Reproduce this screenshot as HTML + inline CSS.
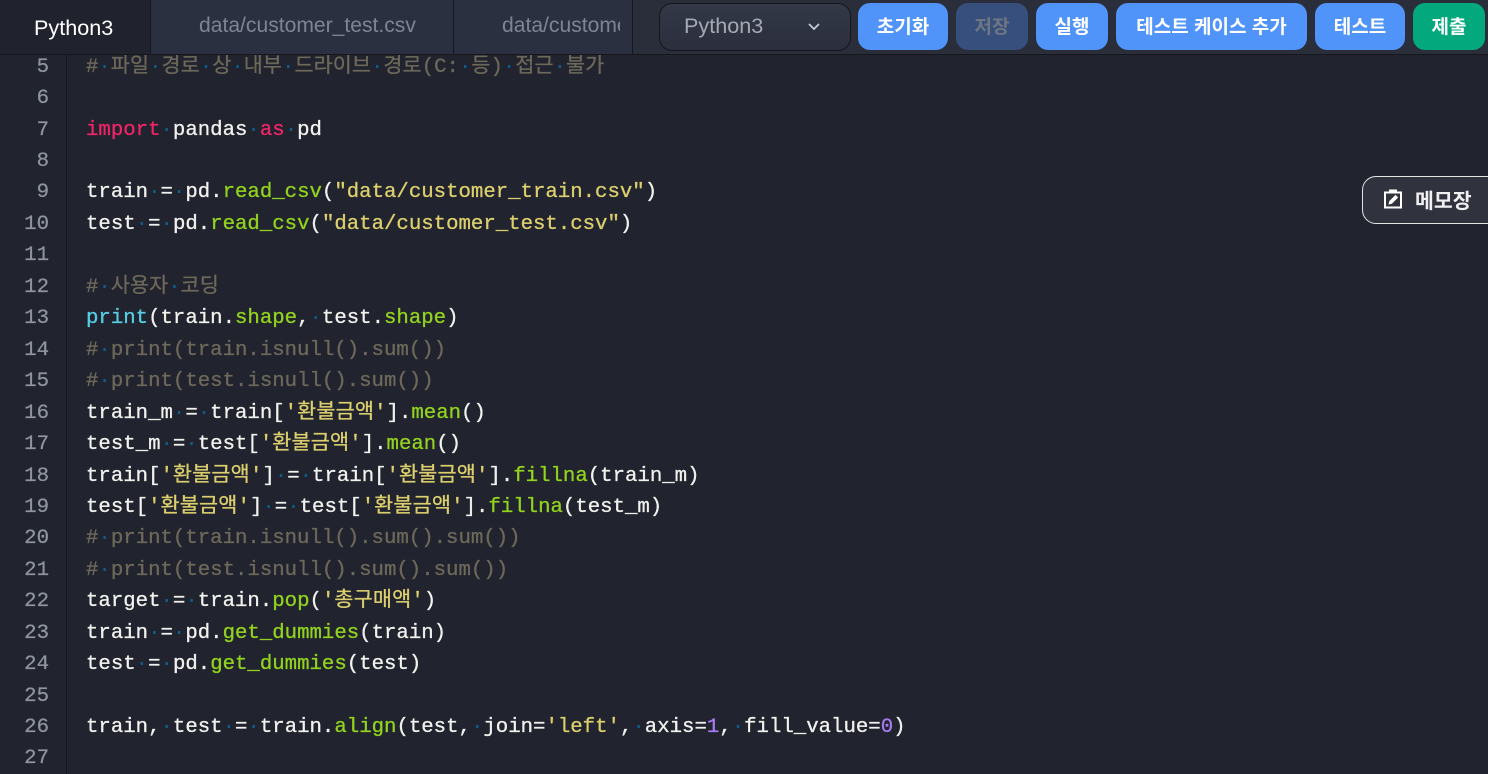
<!DOCTYPE html>
<html lang="ko"><head><meta charset="utf-8"><title>Editor</title>
<style>
*{box-sizing:border-box}
html,body{margin:0;padding:0;width:1488px;height:774px;overflow:hidden;background:#21242e}
body{position:relative;font-family:"Liberation Sans","Noto Sans CJK KR",sans-serif}
#head{position:absolute;z-index:5;left:0;top:0;width:1488px;height:55px;background:#2a2e3b;border-bottom:1px solid #15171d}
.tab{position:absolute;top:0;height:54px;background:#2b3040;border-right:1px solid #15171d;color:#7d8494;font-size:21.1px;line-height:52px;overflow:hidden;white-space:nowrap}
.btn{position:absolute;top:3px;height:47px;border-radius:12px;background:#5094fa;color:#fff;font:700 19px/46px "Noto Sans CJK KR",sans-serif;text-align:center;white-space:nowrap}
#sel{position:absolute;left:659px;top:3px;width:192px;height:48px;border-radius:13px;background:linear-gradient(#333846,#2b2f3d);border:1px solid #14161c;color:#a4a9b4;font-size:21.6px;line-height:44px;padding-left:24px}
#gut{position:absolute;left:0;top:55px;width:67px;height:719px;border-right:1px solid #14161c}
#code{position:absolute;left:0;top:2.7px;width:1488px;height:772px}
.n{position:absolute;left:0;width:49px;text-align:right;font:20.7px/31.45px "Liberation Mono",monospace;color:#8f94a1;white-space:pre;-webkit-text-stroke:.25px #8f94a1}
.l{position:absolute;left:86px;font:20.7px/31.45px "Liberation Mono","Noto Sans CJK KR",monospace;color:#f1f1ee;white-space:pre;-webkit-text-stroke:.3px}
.l i{font-style:normal;color:#0e5f8e;-webkit-text-stroke:0}
.h{letter-spacing:.22px}
.c .h{letter-spacing:.1px}
.c{color:#6d685a}
.k{color:#f02468}.g{color:#92d31e}.s{color:#dccf6e}.b{color:#56cfe6}.p{color:#a77bf0}
#memo{position:absolute;z-index:4;left:1362px;top:176px;width:140px;height:48px;border:1px solid #e4e4e6;border-radius:14px;background:#30333e;color:#f0f0f2;font:700 20.5px/44px "Noto Sans CJK KR",sans-serif;padding-left:52px}
#memo svg{position:absolute;left:20px;top:11px}
</style></head><body>
<div id="head">
<div class="tab" style="left:0;width:151px;background:#20232d;color:#fff;padding-left:34px;line-height:56px;font-size:21.6px">Python3</div>
<div class="tab" style="left:151px;width:303px;padding-left:48px">data/customer_test.csv</div>
<div class="tab" style="left:454px;width:179px;padding-left:48px"><span style="display:inline-block;width:118px;overflow:hidden;vertical-align:top">data/customer_train.csv</span></div>
<div id="sel">Python3<svg style="position:absolute;left:147px;top:18px" width="14" height="10" viewBox="0 0 14 10"><path d="M2 2l5 5 5-5" fill="none" stroke="#c8ccd4" stroke-width="1.7"/></svg></div>
<div class="btn" style="left:858px;width:90px">초기화</div>
<div class="btn" style="left:956px;width:72px;background:#374f7c;color:#6e7583">저장</div>
<div class="btn" style="left:1036px;width:72px">실행</div>
<div class="btn" style="left:1116px;width:191px">테스트 케이스 추가</div>
<div class="btn" style="left:1315px;width:90px">테스트</div>
<div class="btn" style="left:1413px;width:72px;background:#03a87c">제출</div>
</div>
<div id="gut"></div>
<div id="code">
<div class="n" style="top:49px">5</div><div class="n" style="top:80.5px">6</div><div class="n" style="top:112px">7</div><div class="n" style="top:143.4px">8</div><div class="n" style="top:174.8px">9</div><div class="n" style="top:206.3px">10</div><div class="n" style="top:237.7px">11</div><div class="n" style="top:269.2px">12</div><div class="n" style="top:300.6px">13</div><div class="n" style="top:332px">14</div><div class="n" style="top:363.5px">15</div><div class="n" style="top:395px">16</div><div class="n" style="top:426.4px">17</div><div class="n" style="top:457.9px">18</div><div class="n" style="top:489.3px">19</div><div class="n" style="top:520.7px">20</div><div class="n" style="top:552.2px">21</div><div class="n" style="top:583.6px">22</div><div class="n" style="top:615px">23</div><div class="n" style="top:646.5px">24</div><div class="n" style="top:678px">25</div><div class="n" style="top:709.4px">26</div><div class="n" style="top:740.8px">27</div>
<div class="l c" style="top:49px">#<i>·</i><span class="h">파일</span><i>·</i><span class="h">경로</span><i>·</i><span class="h">상</span><i>·</i><span class="h">내부</span><i>·</i><span class="h">드라이브</span><i>·</i><span class="h">경로</span>(C:<i>·</i><span class="h">등</span>)<i>·</i><span class="h">접근</span><i>·</i><span class="h">불가</span></div>
<div class="l" style="top:112px"><span class="k">import</span><i>·</i>pandas<i>·</i><span class="k">as</span><i>·</i>pd</div>
<div class="l" style="top:174.8px">train<i>·</i>=<i>·</i>pd.<span class="g">read_csv</span>(<span class="s">"data/customer_train.csv"</span>)</div>
<div class="l" style="top:206.3px">test<i>·</i>=<i>·</i>pd.<span class="g">read_csv</span>(<span class="s">"data/customer_test.csv"</span>)</div>
<div class="l c" style="top:269.2px">#<i>·</i><span class="h">사용자</span><i>·</i><span class="h">코딩</span></div>
<div class="l" style="top:300.6px"><span class="b">print</span>(train.<span class="g">shape</span>,<i>·</i>test.<span class="g">shape</span>)</div>
<div class="l c" style="top:332px">#<i>·</i>print(train.isnull().sum())</div>
<div class="l c" style="top:363.5px">#<i>·</i>print(test.isnull().sum())</div>
<div class="l" style="top:395px">train_m<i>·</i>=<i>·</i>train[<span class="s">'<span class="h">환불금액</span>'</span>].<span class="g">mean</span>()</div>
<div class="l" style="top:426.4px">test_m<i>·</i>=<i>·</i>test[<span class="s">'<span class="h">환불금액</span>'</span>].<span class="g">mean</span>()</div>
<div class="l" style="top:457.9px">train[<span class="s">'<span class="h">환불금액</span>'</span>]<i>·</i>=<i>·</i>train[<span class="s">'<span class="h">환불금액</span>'</span>].<span class="g">fillna</span>(train_m)</div>
<div class="l" style="top:489.3px">test[<span class="s">'<span class="h">환불금액</span>'</span>]<i>·</i>=<i>·</i>test[<span class="s">'<span class="h">환불금액</span>'</span>].<span class="g">fillna</span>(test_m)</div>
<div class="l c" style="top:520.7px">#<i>·</i>print(train.isnull().sum().sum())</div>
<div class="l c" style="top:552.2px">#<i>·</i>print(test.isnull().sum().sum())</div>
<div class="l" style="top:583.6px">target<i>·</i>=<i>·</i>train.<span class="g">pop</span>(<span class="s">'<span class="h">총구매액</span>'</span>)</div>
<div class="l" style="top:615px">train<i>·</i>=<i>·</i>pd.<span class="g">get_dummies</span>(train)</div>
<div class="l" style="top:646.5px">test<i>·</i>=<i>·</i>pd.<span class="g">get_dummies</span>(test)</div>
<div class="l" style="top:709.4px">train,<i>·</i>test<i>·</i>=<i>·</i>train.<span class="g">align</span>(test,<i>·</i>join=<span class="s">'left'</span>,<i>·</i>axis=<span class="p">1</span>,<i>·</i>fill_value=<span class="p">0</span>)</div>
</div>
<div id="memo"><svg width="20" height="22" viewBox="0 0 20 22"><path d="M2 4.5h16v15H2z" fill="none" stroke="#fff" stroke-width="2"/><path d="M7 4.5V2.5h6v2" fill="none" stroke="#fff" stroke-width="2"/><path d="M5.5 16.5l.8-3.4 6.2-6.2 2.6 2.6-6.2 6.2z" fill="#fff"/></svg>메모장</div>
</body></html>
